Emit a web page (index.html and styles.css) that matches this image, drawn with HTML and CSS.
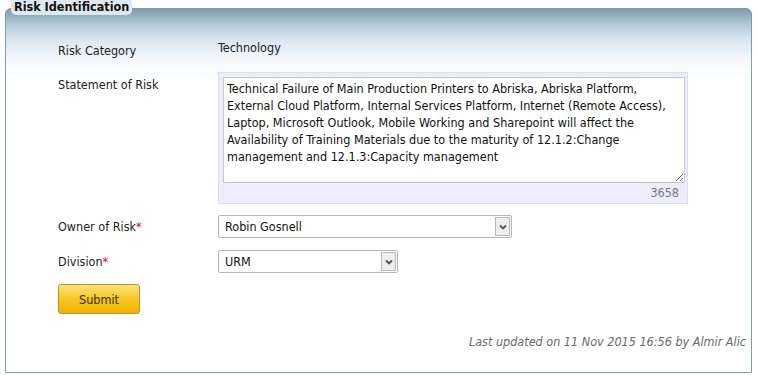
FILE: index.html
```html
<!DOCTYPE html>
<html>
<head lang="en">
    <meta charset="UTF-8">
    <title>Risk Identification</title>
    <link rel="stylesheet" href="styles.css">
</head>
<body>
<div id="panel">
    <span id="legend">Risk Identification</span>
    <div class="row row-category">
        <label class="label">Risk Category</label>
        <span class="value">Technology</span>
    </div>
    <div class="row row-statement">
        <label class="label">Statement of Risk</label>
        <div class="text-wrap">
            <textarea class="text">Technical Failure of Main Production Printers to Abriska, Abriska Platform, External Cloud Platform, Internal Services Platform, Internet (Remote Access), Laptop, Microsoft Outlook, Mobile Working and Sharepoint will affect the Availability of Training Materials due to the maturity of 12.1.2:Change management and 12.1.3:Capacity management</textarea>
            <div class="counter">3658</div>
        </div>
    </div>
    <div class="row row-owner">
        <label class="label">Owner of Risk<em>*</em></label>
        <div class="select owner">
            <select><option>Robin Gosnell</option></select>
            <span class="arrow"><svg width="8" height="6" viewBox="0 0 8 6"><path d="M1 1.5 L4 4.5 L7 1.5" fill="none" stroke="#555" stroke-width="1.8"/></svg></span>
        </div>
    </div>
    <div class="row row-division">
        <label class="label">Division<em>*</em></label>
        <div class="select division">
            <select><option>URM</option></select>
            <span class="arrow"><svg width="8" height="6" viewBox="0 0 8 6"><path d="M1 1.5 L4 4.5 L7 1.5" fill="none" stroke="#555" stroke-width="1.8"/></svg></span>
        </div>
    </div>
    <div class="row row-submit">
        <button class="btn">Submit</button>
    </div>
    <div class="updated">Last updated on 11 Nov 2015 16:56 by Almir Alic</div>
</div>
</body>
</html>
```

FILE: styles.css
```css
*{
    margin: 0;
    padding: 0;
    box-sizing: border-box;
}
body{
    font-family: "DejaVu Sans Condensed", "DejaVu Sans", sans-serif;
    font-size: 12.5px;
    line-height: 15px;
    color: #222;
    background: #fff;
}
#panel{
    position: relative;
    margin: 8px 6px 0 5px;
    height: 365px;
    border: 1px solid #7e9aab;
    border-radius: 6px 6px 0 0;
    background: linear-gradient(#7e9bad 0, #b5cad8 16px, #dbe8f3 32px, #f6f9fc 52px, #fff 70px);
    padding-left: 52px;
}
#legend{
    position: absolute;
    left: 5px;
    top: -9px;
    padding: 0 3px;
    height: 15px;
    line-height: 14px;
    font-weight: bold;
    color: #111;
    background: #e0e8ef;
    border-radius: 0 0 5px 5px;
}
.row{
    display: flex;
    align-items: flex-start;
}
.label{
    width: 160px;
    flex: none;
}
.label em{
    color: #e00;
    font-style: normal;
}
.row-category{
    padding-top: 31px;
}
.row-category .label{
    padding-top: 3px;
}
.row-statement{
    margin-top: 14px;
}
.row-statement .label{
    padding-top: 5px;
}
.text-wrap{
    width: 470px;
    height: 132px;
    padding: 4px 4px 0;
    background: #ececfb;
    border: 1px solid #dcdcf3;
}
.text{
    display: block;
    width: 462px;
    height: 106px;
    border: 1px solid #c8c8c8;
    padding: 2px 3px;
    font-family: inherit;
    font-size: 12.5px;
    line-height: 17px;
    color: #111;
    resize: vertical;
    overflow: hidden;
}
.counter{
    text-align: right;
    padding-right: 4px;
    line-height: 20px;
    color: #777;
}
.row-owner{
    margin-top: 11px;
    align-items: center;
}
.row-division{
    margin-top: 12px;
    align-items: center;
}
.select{
    position: relative;
    height: 23px;
}
.select.owner{
    width: 294px;
}
.select.division{
    width: 180px;
}
.select select{
    appearance: none;
    width: 100%;
    height: 100%;
    border: 1px solid #b4b4b4;
    border-radius: 2px;
    background: #fff;
    padding-left: 6px;
    font-family: inherit;
    font-size: 12.5px;
    color: #111;
}
.arrow{
    position: absolute;
    right: 2px;
    top: 2px;
    width: 15px;
    height: 19px;
    background: #eee;
    border: 1px solid #b8b8b8;
    display: flex;
    align-items: center;
    justify-content: center;
    pointer-events: none;
}
.row-submit{
    margin-top: 11px;
}
.btn{
    width: 82px;
    height: 30px;
    border: 1px solid #b8962e;
    border-radius: 3px;
    background: linear-gradient(#fde37a, #f7c623 50%, #efb200);
    font-family: inherit;
    font-size: 12.5px;
    color: #3a3010;
}
.updated{
    text-align: right;
    margin-top: 20px;
    padding-right: 5px;
    font-style: italic;
    color: #6a6a6a;
}
```
